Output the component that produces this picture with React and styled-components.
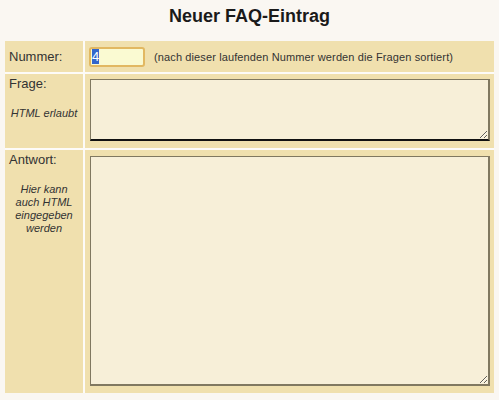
import React from "react"
import styled, { createGlobalStyle } from "styled-components"

const GlobalStyle = createGlobalStyle`
  html, body {
    margin: 0;
    padding: 0;
    background: #faf7f2;
  }
  body {
    font-family: "Liberation Sans", Arial, sans-serif;
    color: #222;
  }
`

const Page = styled.div`
  width: 499px;
  height: 400px;
  padding: 0 5px;
  box-sizing: border-box;
`

const Title = styled.h1`
  margin: 0;
  height: 41px;
  padding-top: 6px;
  box-sizing: border-box;
  font-size: 18px;
  font-weight: bold;
  text-align: center;
  color: #1a1a1a;
`

const FormGrid = styled.div`
  display: grid;
  grid-template-columns: 78px 1fr;
  grid-template-rows: 31px 74px 243px;
  gap: 2px;
  background: #fdfbf8;
`

const LabelCell = styled.div`
  background: #f0e0ae;
  padding: ${p => (p.$middle ? "0 4px" : "2px 4px 0")};
  display: flex;
  flex-direction: column;
  justify-content: ${p => (p.$middle ? "center" : "flex-start")};
  font-size: 13px;
  color: #333;
`

const Hint = styled.div`
  margin-top: ${p => p.$gap}px;
  font-size: 11px;
  font-style: italic;
  line-height: 13px;
  text-align: center;
  color: #333;
  padding: 0 1px;
`

const FieldCell = styled.div`
  background: #f0e0ae;
  padding: ${p => p.$pad};
  display: flex;
  align-items: ${p => (p.$middle ? "center" : "flex-start")};
  gap: 9px;
`

const NumberInput = styled.input`
  width: 56px;
  height: 20px;
  box-sizing: border-box;
  border: 2px solid #e2b862;
  border-radius: 3px;
  background: #fafad2;
  font-family: "Liberation Sans", Arial, sans-serif;
  font-size: 13px;
  padding: 0 1px;
  color: #333;
  outline: none;
  &::selection {
    background: #3366cc;
    color: #fff;
  }
`

const Note = styled.span`
  font-size: 11px;
  letter-spacing: 0.12px;
  color: #333;
`

const TextArea = styled.textarea`
  display: block;
  width: 400px;
  height: ${p => p.$h}px;
  box-sizing: border-box;
  background: #f7efd8;
  border: 1px solid #807860;
  border-right-width: 2px;
  border-bottom: 2px solid ${p => (p.$dark ? "#111" : "#807860")};
  font-family: "Liberation Sans", Arial, sans-serif;
  font-size: 12px;
  resize: both;
  outline: none;
`

export default function App() {
  const numRef = React.useRef(null)
  React.useEffect(() => {
    if (numRef.current) {
      numRef.current.focus()
      numRef.current.select()
    }
  }, [])

  return (
    <Page>
      <GlobalStyle />
      <Title>Neuer FAQ-Eintrag</Title>
      <FormGrid>
        <LabelCell $middle>Nummer:</LabelCell>
        <FieldCell $middle $pad="0 4px">
          <NumberInput ref={numRef} defaultValue="4" />
          <Note>(nach dieser laufenden Nummer werden die Fragen sortiert)</Note>
        </FieldCell>

        <LabelCell>
          Frage:
          <Hint $gap={16}>HTML erlaubt</Hint>
        </LabelCell>
        <FieldCell $pad="5px 4px 0 5px">
          <TextArea $h={62} $dark />
        </FieldCell>

        <LabelCell>
          Antwort:
          <Hint $gap={16}>
            Hier kann auch HTML eingegeben werden
          </Hint>
        </LabelCell>
        <FieldCell $pad="6px 4px 0 5px">
          <TextArea $h={230} />
        </FieldCell>
      </FormGrid>
    </Page>
  )
}
